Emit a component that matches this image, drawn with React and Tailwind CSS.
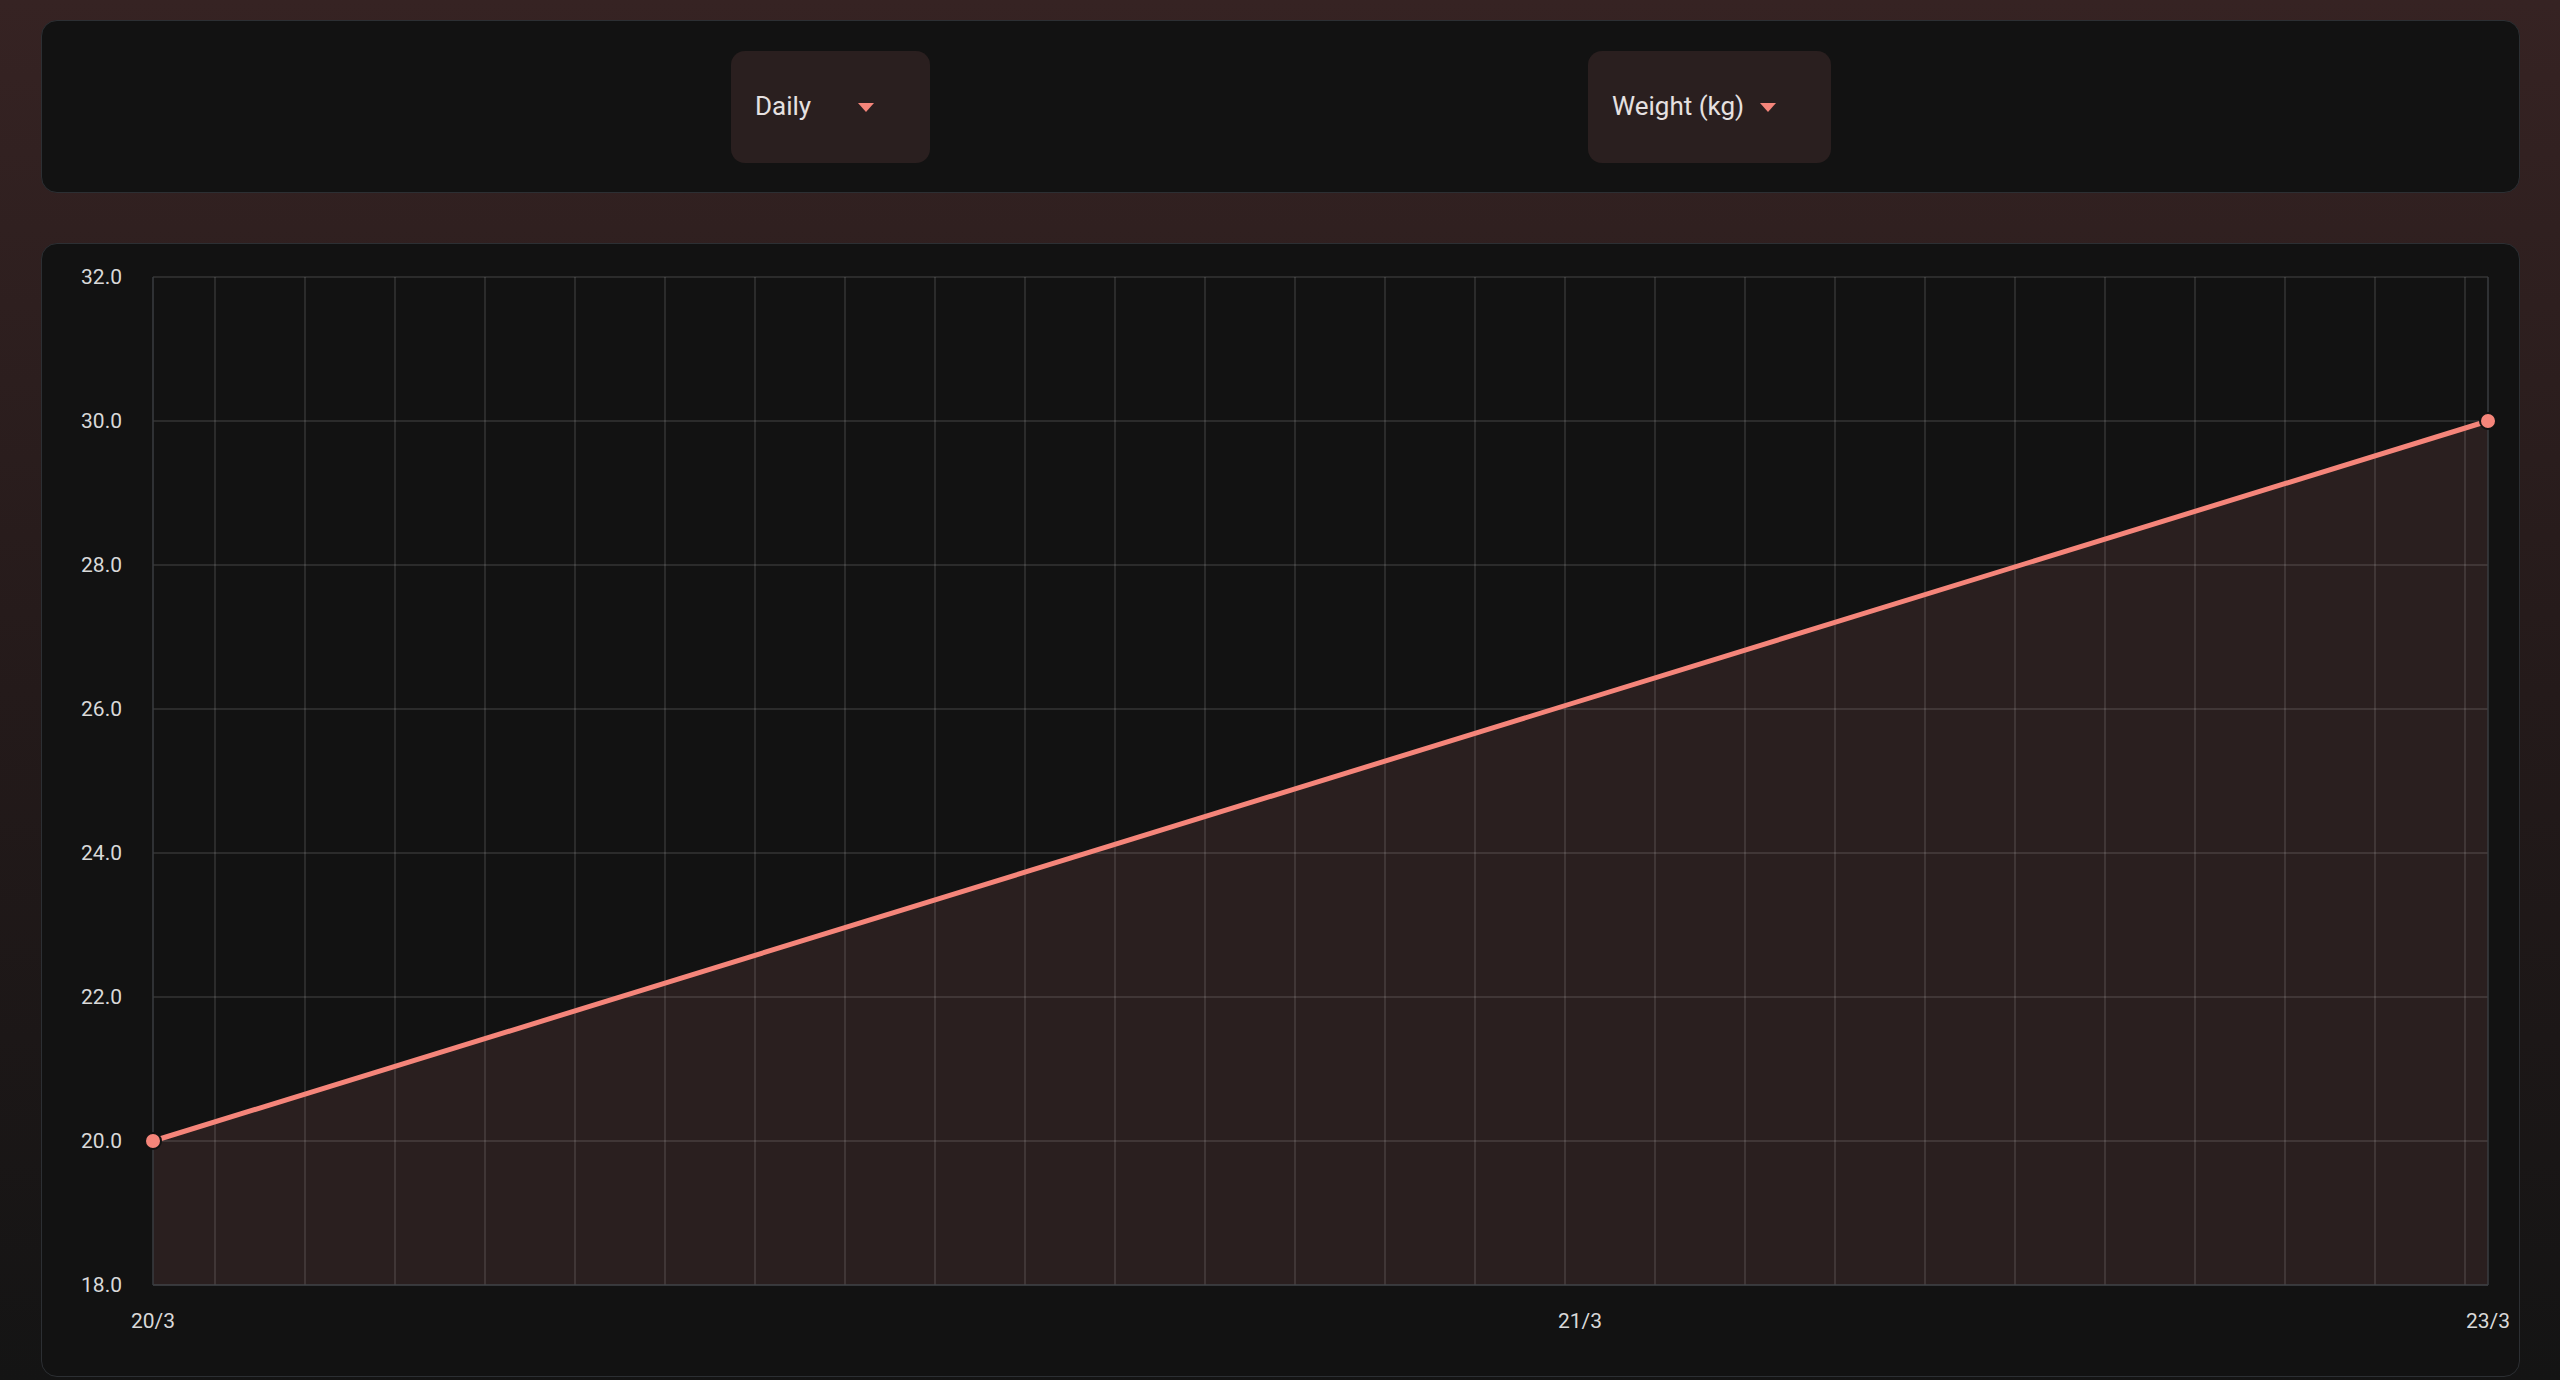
export default function App() {
  const vx = [];
  for (let i = 0; i < 26; i++) vx.push(214 - 41 + i * 90);
  const hy = [];
  for (let i = 0; i <= 7; i++) hy.push(33 + i * 144);
  const labels = ["32.0", "30.0", "28.0", "26.0", "24.0", "22.0", "20.0", "18.0"];
  const x0 = 111, x1 = 2446, yA = 1041 - 144, yB = 33 + 144, yBot = 1041;
  const Tri = () => (
    <svg width="20" height="11" viewBox="0 0 20 11"><path d="M2 1 L18 1 L10 10 Z" fill="#f5857a" /></svg>
  );
  return (
    <div className="w-[2560px] h-[1380px] overflow-hidden bg-gradient-to-b from-[#362323] via-[#241a1a] to-[#141414] pt-[20px] px-[40px] pl-[41px]" style={{ fontFamily: "Roboto, sans-serif" }}>
      <div className="h-[173px] rounded-[16px] border border-[#2c2f33] bg-[#121212] flex items-center">
        <button className="ml-[689px] w-[199px] h-[112px] rounded-[14px] bg-[#2a1f1f] flex items-center pl-[24px] text-[26px] text-[#e6e1e1]">
          <span>Daily</span>
          <span className="ml-[45px] mt-[2px]"><Tri /></span>
        </button>
        <button className="ml-[658px] w-[243px] h-[112px] rounded-[14px] bg-[#2a1f1f] flex items-center pl-[24px] text-[26px] text-[#e6e1e1]">
          <span>Weight (kg)</span>
          <span className="ml-[14px] mt-[2px]"><Tri /></span>
        </button>
      </div>
      <div className="mt-[50px] h-[1134px] rounded-[16px] border border-[#2c2f33] bg-[#121212]">
        <svg width="2477" height="1132" className="block">
          <polygon points={`${x0},${yA} ${x1},${yB} ${x1},${yBot} ${x0},${yBot}`} fill="#2a1f1f" />
          {vx.map((x) => <line key={x} x1={x} x2={x} y1={33} y2={1041} stroke="#ffffff" strokeOpacity="0.14" strokeWidth="1.5" />)}
          {hy.map((y) => <line key={y} x1={x0} x2={x1} y1={y} y2={y} stroke="#ffffff" strokeOpacity="0.14" strokeWidth="1.5" />)}
          <line x1={x0} x2={x0} y1={33} y2={1041} stroke="#3a3d40" strokeWidth="1.5" />
          <line x1={x1} x2={x1} y1={33} y2={1041} stroke="#3a3d40" strokeWidth="1.5" />
          <line x1={x0} x2={x1} y1={1041} y2={1041} stroke="#3a3d40" strokeWidth="1.5" />
          {labels.map((l, i) => (
            <text key={l} x={80} y={33 + i * 144 + 7} textAnchor="end" fill="#d9d9d9" fontSize="21" fontFamily="Roboto, sans-serif">{l}</text>
          ))}
          <text x={x0} y={1084} textAnchor="middle" fill="#d9d9d9" fontSize="21" fontFamily="Roboto, sans-serif">20/3</text>
          <text x={1538} y={1084} textAnchor="middle" fill="#d9d9d9" fontSize="21" fontFamily="Roboto, sans-serif">21/3</text>
          <text x={x1} y={1084} textAnchor="middle" fill="#d9d9d9" fontSize="21" fontFamily="Roboto, sans-serif">23/3</text>
          <line x1={x0} y1={yA} x2={x1} y2={yB} stroke="#f5857a" strokeWidth="5" />
          <circle cx={x0} cy={yA} r="8" fill="#f5857a" stroke="#121212" strokeWidth="2" />
          <circle cx={x1} cy={yB} r="8" fill="#f5857a" stroke="#121212" strokeWidth="2" />
        </svg>
      </div>
    </div>
  );
}
